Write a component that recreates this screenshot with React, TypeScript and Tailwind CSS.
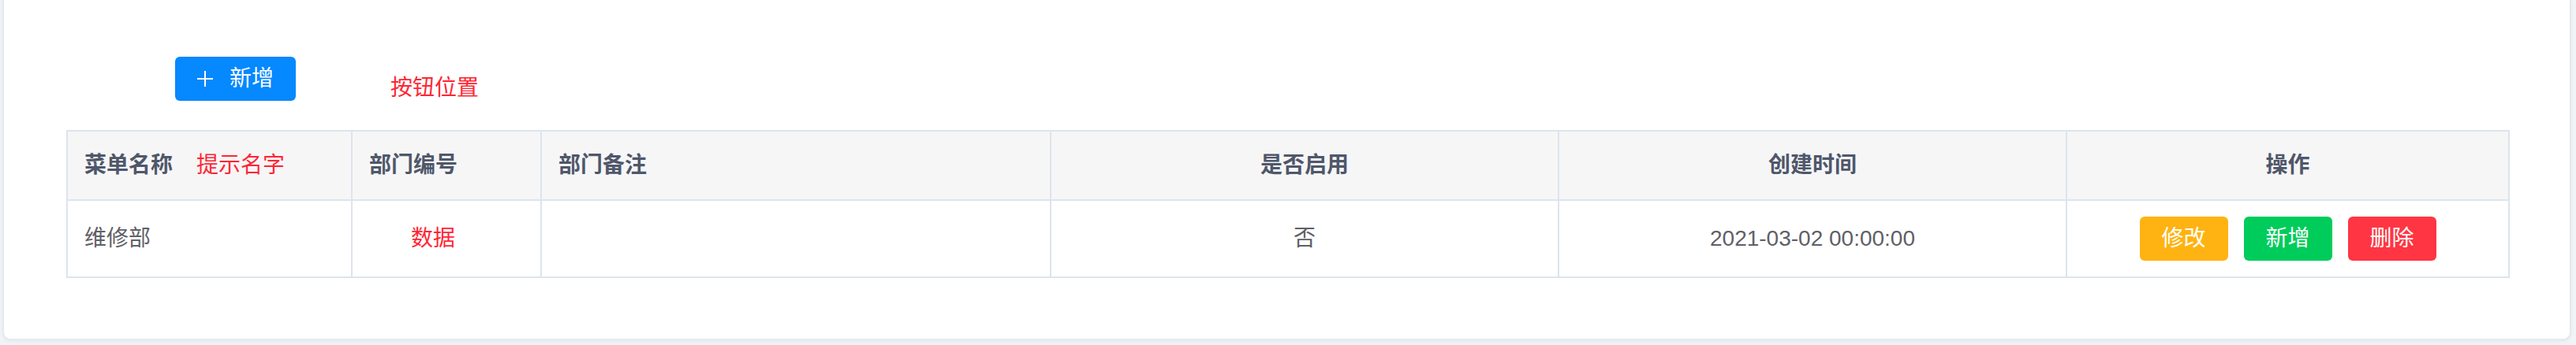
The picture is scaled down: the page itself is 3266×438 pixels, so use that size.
import React from "react";

const headCols = [
  { w: "w-[361px]", label: "菜单名称", align: "left" },
  { w: "w-[240px]", label: "部门编号", align: "left" },
  { w: "w-[646px]", label: "部门备注", align: "left" },
  { w: "w-[644px]", label: "是否启用", align: "center" },
  { w: "w-[644px]", label: "创建时间", align: "center" },
  { w: "w-[561px]", label: "操作", align: "center" },
];

function PlusIcon() {
  return (
    <svg width="20" height="20" viewBox="0 0 20 20" fill="none" stroke="currentColor" strokeWidth="2">
      <path d="M10 0v20M0 10h20" />
    </svg>
  );
}

export default function App() {
  return (
    <div
      className="w-[3266px] h-[438px] overflow-hidden bg-[#f2f3f6]"
      style={{ fontFamily: '"Liberation Sans", "Noto Sans CJK SC", sans-serif' }}
    >
      {/* Card, top edge is scrolled out of view */}
      <div className="ml-[3px] w-[3257px] h-[432px] bg-white border-2 border-t-0 border-[#e4e8f0] rounded-b-[10px] shadow-[0_2px_4px_rgba(0,0,0,0.04)]">
        {/* toolbar */}
        <div className="flex items-start pt-[72px] pl-[217px]">
          <button className="flex items-center justify-center gap-[21px] w-[153px] h-[56px] rounded-[6px] bg-[#0688fe] text-white text-[28px] leading-none">
            <PlusIcon />
            <span>新增</span>
          </button>
          <span className="ml-[120px] mt-[22px] h-[36px] leading-[36px] text-[28px] text-[#ff2533]">按钮位置</span>
        </div>

        {/* table */}
        <table className="ml-[79px] mt-[35px] table-fixed border-collapse text-[28px]">
          <colgroup>
            {headCols.map((c) => (
              <col key={c.label} className={c.w} />
            ))}
          </colgroup>
          <thead>
            <tr className="h-[88px] bg-[#f6f6f7]">
              {headCols.map((c, i) => (
                <th
                  key={c.label}
                  className={`border-2 border-[#dde4ed] px-[21px] font-semibold text-[#4f576a] ${
                    c.align === "center" ? "text-center" : "text-left"
                  }`}
                >
                  {c.label}
                  {i === 0 && <span className="ml-[30px] font-normal text-[#ff2533]">提示名字</span>}
                </th>
              ))}
            </tr>
          </thead>
          <tbody>
            <tr className="h-[98px] text-[#5f6066]">
              <td className="border-2 border-[#dde4ed] px-[21px]">维修部</td>
              <td className="border-2 border-[#dde4ed] pl-[74px] text-[#ff2533]">数据</td>
              <td className="border-2 border-[#dde4ed]"></td>
              <td className="border-2 border-[#dde4ed] text-center">否</td>
              <td className="border-2 border-[#dde4ed] text-center">2021-03-02 00:00:00</td>
              <td className="border-2 border-[#dde4ed]">
                <div className="flex justify-center gap-[20px]">
                  <button className="w-[112px] h-[56px] rounded-[6px] bg-[#ffb312] text-white">修改</button>
                  <button className="w-[112px] h-[56px] rounded-[6px] bg-[#00cc5b] text-white">新增</button>
                  <button className="w-[112px] h-[56px] rounded-[6px] bg-[#ff3543] text-white">删除</button>
                </div>
              </td>
            </tr>
          </tbody>
        </table>
      </div>
    </div>
  );
}
